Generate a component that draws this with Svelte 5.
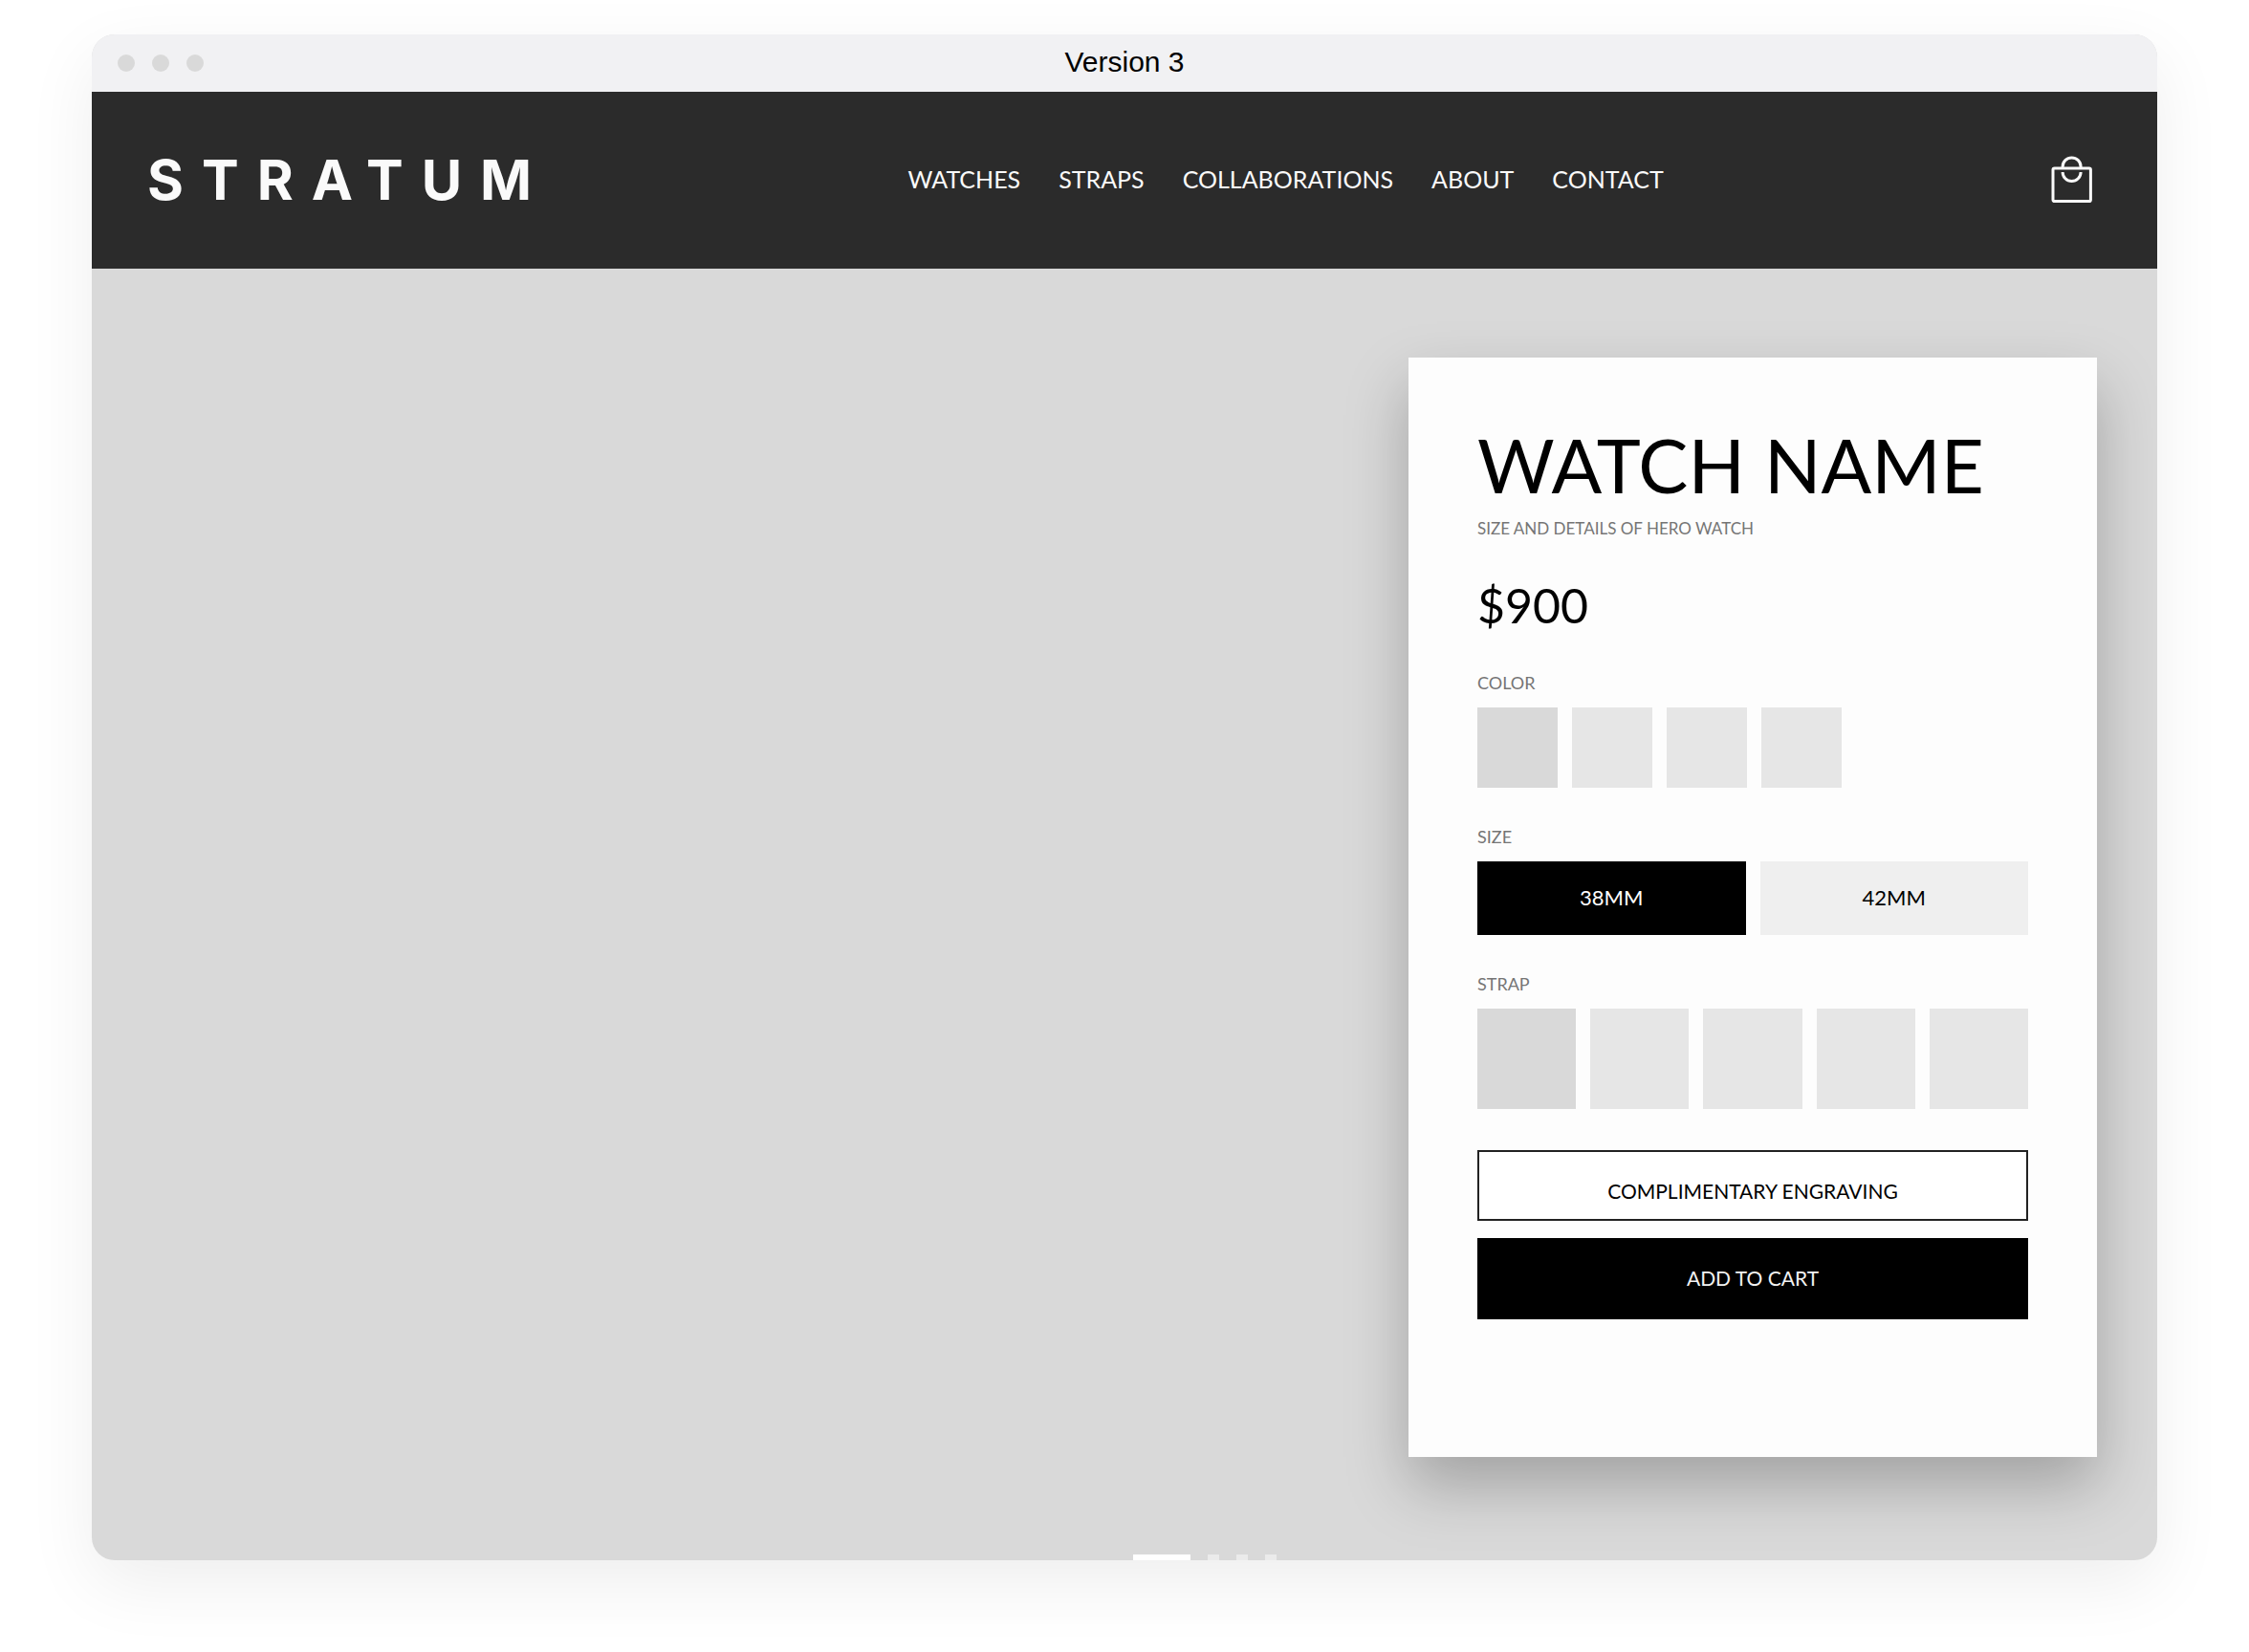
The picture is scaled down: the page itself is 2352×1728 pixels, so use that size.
<script>
  const links = ["WATCHES", "STRAPS", "COLLABORATIONS", "ABOUT", "CONTACT"];
  const colors = [1, 2, 3, 4];
  const sizes = ["38MM", "42MM"];
  const straps = [1, 2, 3, 4, 5];
  const slides = [1, 2, 3, 4];

  let color = $state(1);
  let size = $state("38MM");
  let strap = $state(1);
  let slide = $state(1);
</script>

<div class="window">
  <div class="titlebar">
    <div class="dots">
      <span></span>
      <span></span>
      <span></span>
    </div>
    <div class="title">Version 3</div>
  </div>

  <header class="site-header">
    <a class="logo" href="#home">STRATUM</a>
    <nav>
      {#each links as link}
        <a href="#{link.toLowerCase()}">{link}</a>
      {/each}
    </nav>
    <button type="button" class="bag" aria-label="Cart">
      <svg viewBox="0 0 44 50" width="44" height="50" fill="none" stroke="currentColor" stroke-width="3">
        <rect x="2" y="13" width="39.4" height="34.6" rx="1.6" />
        <path d="M12.1 12.5V11.4a9.5 9.5 0 0 1 19 0v1.1" />
        <path d="M12.1 17a9.5 9.6 0 0 0 19 0" />
      </svg>
    </button>
  </header>

  <main class="hero">
    <section class="card">
      <h1>WATCH NAME</h1>
      <p class="details">SIZE AND DETAILS OF HERO WATCH</p>
      <p class="price">$900</p>

      <div class="option" role="group" aria-labelledby="color-label">
        <div class="label" id="color-label">COLOR</div>
        <div class="row">
          {#each colors as c}
            <button
              type="button"
              class="swatch"
              class:active={color === c}
              aria-label="Color {c}"
              aria-pressed={color === c}
              onclick={() => (color = c)}
            ></button>
          {/each}
        </div>
      </div>

      <div class="option" role="group" aria-labelledby="size-label">
        <div class="label" id="size-label">SIZE</div>
        <div class="row">
          {#each sizes as s}
            <button
              type="button"
              class="size"
              class:active={size === s}
              aria-pressed={size === s}
              onclick={() => (size = s)}>{s}</button
            >
          {/each}
        </div>
      </div>

      <div class="option" role="group" aria-labelledby="strap-label">
        <div class="label" id="strap-label">STRAP</div>
        <div class="row">
          {#each straps as s}
            <button
              type="button"
              class="swatch strap"
              class:active={strap === s}
              aria-label="Strap {s}"
              aria-pressed={strap === s}
              onclick={() => (strap = s)}
            ></button>
          {/each}
        </div>
      </div>

      <div class="actions">
        <button type="button" class="engrave">COMPLIMENTARY ENGRAVING</button>
        <button type="button" class="add">ADD TO CART</button>
      </div>
    </section>

    <div class="slides">
      {#each slides as s}
        <button
          type="button"
          class="slide"
          class:active={slide === s}
          aria-label="Slide {s}"
          onclick={() => (slide = s)}
        ></button>
      {/each}
    </div>
  </main>
</div>

<style>
  :global(body) {
    background: #fff;
    font-family: Lato, sans-serif;
    color: #000;
  }

  button {
    margin: 0;
    padding: 0;
    border: 0;
    border-radius: 0;
    font: inherit;
    color: inherit;
    cursor: pointer;
  }

  .window {
    margin: 36px 96px 96px;
    border-radius: 24px;
    overflow: hidden;
    background: #d9d9d9;
    box-shadow: 0 24px 72px rgba(0, 0, 0, 0.07);
  }

  .titlebar {
    display: grid;
    grid-template-columns: 1fr auto 1fr;
    align-items: center;
    height: 60px;
    padding: 0 27px;
    background: #f1f1f3;
  }

  .dots {
    display: flex;
    gap: 18px;
  }

  .dots span {
    width: 18px;
    height: 18px;
    border-radius: 50%;
    background: #d9d9d9;
  }

  .title {
    padding-bottom: 2px;
    font-family: "Liberation Sans", Arial, sans-serif;
    font-size: 30px;
    line-height: 36px;
  }

  .site-header {
    display: flex;
    align-items: center;
    justify-content: space-between;
    box-sizing: border-box;
    height: 185px;
    padding: 0 67px 2px 58px;
    background: #2b2b2b;
    color: #fafafa;
  }

  .site-header a {
    color: inherit;
    text-decoration: none;
  }

  /* negative margin drops the tracking after the last letter */
  .logo {
    margin-right: -19px;
    font-family: Inter, sans-serif;
    font-size: 58px;
    font-weight: 700;
    line-height: 60px;
    letter-spacing: 19px;
  }

  nav {
    display: flex;
    gap: 40px;
    padding-bottom: 2px;
    font-size: 25px;
    line-height: 30px;
  }

  .bag {
    display: flex;
    padding-left: 12px;
    background: none;
  }

  .hero {
    display: flex;
    flex-direction: column;
    padding: 93px 63px 0;
  }

  .card {
    align-self: flex-end;
    box-sizing: border-box;
    width: min(720px, 100%);
    padding: 72px 72px 144px;
    background: #fdfdfd;
    box-shadow: 0 30px 60px rgba(0, 0, 0, 0.25);
  }

  h1 {
    margin: 0;
    font-size: 78px;
    font-weight: 400;
    line-height: 80px;
    white-space: nowrap;
  }

  .details {
    margin: 15px 0 0;
    font-size: 17px;
    line-height: 24px;
    color: #757575;
  }

  .price {
    margin: 38px 0 0;
    font-size: 50px;
    line-height: 60px;
  }

  .option {
    margin-top: 40px;
  }

  .label {
    margin-bottom: 15px;
    font-size: 18px;
    line-height: 22px;
    color: #757575;
  }

  .row {
    display: flex;
    gap: 15px;
  }

  .swatch {
    width: 84px;
    height: 84px;
    background: #e6e6e6;
  }

  .swatch.active {
    background: #d9d9d9;
  }

  .swatch.strap {
    flex: 1;
    height: 105px;
  }

  .size {
    flex: 1;
    height: 77px;
    padding-bottom: 2px;
    background: #efefef;
    font-size: 22px;
  }

  .size.active {
    background: #000;
    color: #fff;
  }

  .actions {
    display: grid;
    gap: 18px;
    margin-top: 43px;
    font-size: 21px;
  }

  .engrave {
    height: 74px;
    padding-top: 10px;
    border: 2px solid #222;
    background: #fff;
  }

  .add {
    height: 85px;
    padding-bottom: 2px;
    background: #000;
    color: #f2f2f2;
  }

  .slides {
    display: flex;
    justify-content: center;
    gap: 18px;
    margin-top: 102px;
    padding-left: 168px;
  }

  .slide {
    width: 12px;
    height: 6px;
    background: #ebebeb;
  }

  .slide.active {
    width: 60px;
    background: #fff;
  }
</style>
